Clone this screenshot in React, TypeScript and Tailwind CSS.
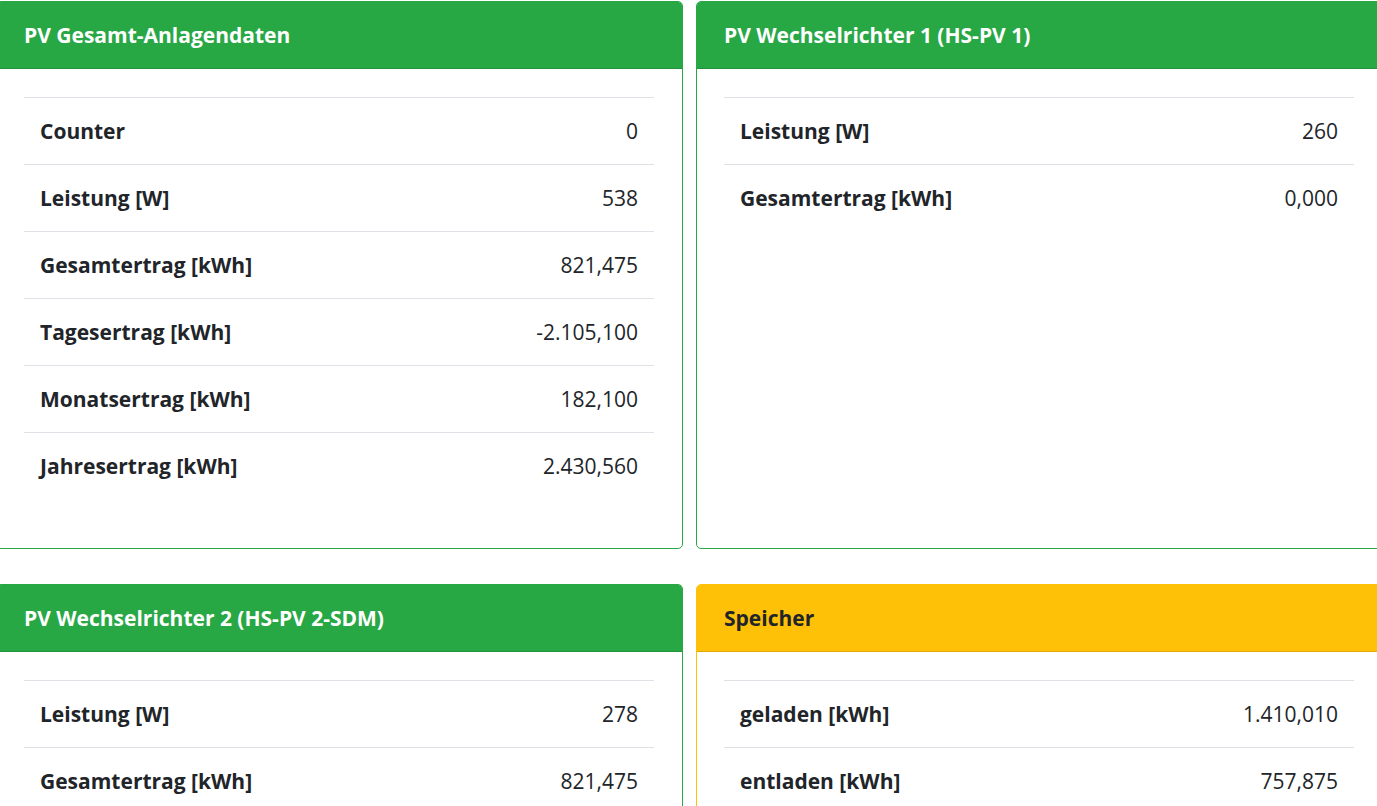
import React from "react";

type Row = [string, string];
type Card = { title: string; color: "green" | "yellow"; rows: Row[] };

const cards: Card[] = [
  {
    title: "PV Gesamt-Anlagendaten",
    color: "green",
    rows: [
      ["Counter", "0"],
      ["Leistung [W]", "538"],
      ["Gesamtertrag [kWh]", "821,475"],
      ["Tagesertrag [kWh]", "-2.105,100"],
      ["Monatsertrag [kWh]", "182,100"],
      ["Jahresertrag [kWh]", "2.430,560"],
    ],
  },
  {
    title: "PV Wechselrichter 1 (HS-PV 1)",
    color: "green",
    rows: [
      ["Leistung [W]", "260"],
      ["Gesamtertrag [kWh]", "0,000"],
    ],
  },
  {
    title: "PV Wechselrichter 2 (HS-PV 2-SDM)",
    color: "green",
    rows: [
      ["Leistung [W]", "278"],
      ["Gesamtertrag [kWh]", "821,475"],
    ],
  },
  {
    title: "Speicher",
    color: "yellow",
    rows: [
      ["geladen [kWh]", "1.410,010"],
      ["entladen [kWh]", "757,875"],
    ],
  },
];

function CardView({ card }: { card: Card }) {
  const green = card.color === "green";
  return (
    <div
      className={
        "flex flex-col rounded-[5px] border bg-white " +
        (green ? "border-[#28a745]" : "border-[#ffc107]")
      }
    >
      <div
        className={
          "flex h-[67px] items-center rounded-t-[4px] border-b pl-[27px] pr-[28px] pt-[2px] text-[21px] font-bold " +
          (green
            ? "border-[#23923d] bg-[#28a745] text-white"
            : "border-[#e0aa08] bg-[#ffc107] text-[#212529]")
        }
      >
        {card.title}
      </div>
      <div className="flex-1 pb-[49px] pl-[27px] pr-[28px] pt-[28px]">
        {card.rows.map(([k, v]) => (
          <div
            key={k}
            className="flex h-[67px] items-center justify-between border-t border-[#dee2e6] px-[16px] pt-[2px] text-[21px] text-[#212529]"
          >
            <span className="font-bold">{k}</span>
            <span>{v}</span>
          </div>
        ))}
      </div>
    </div>
  );
}

export default function App() {
  return (
    <div
      className="h-[806px] w-[1377px] overflow-hidden bg-white"
      style={{ fontFamily: '"Open Sans", "Noto Sans", sans-serif' }}
    >
      <div className="ml-[-4px] mt-[1px] grid grid-cols-[687px_687px] gap-x-[13px] gap-y-[35px]">
        {cards.map((c) => (
          <CardView key={c.title} card={c} />
        ))}
      </div>
    </div>
  );
}
